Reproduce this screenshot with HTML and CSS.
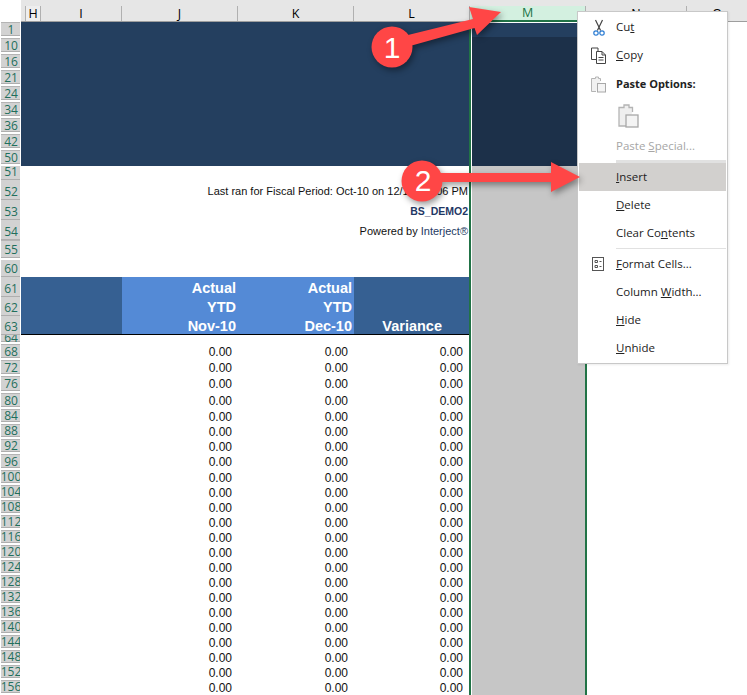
FILE: index.html
```html
<!DOCTYPE html>
<html lang="en">
<head>
<meta charset="utf-8">
<title>Insert column</title>
<link rel="stylesheet" href="styles.css">
</head>
<body>
<div class="sheet">
  <div class="colhead">
    <div class="corner"></div>
    <div class="gapcol"></div>
    <div class="ch w-h">H</div>
    <div class="ch w-i">I</div>
    <div class="ch w-j">J</div>
    <div class="ch w-k">K</div>
    <div class="ch w-l">L</div>
    <div class="ch w-m sel">M</div>
    <div class="ch w-n">N</div>
    <div class="ch w-o">O</div>
  </div>

  <div class="row h16 navy"><div class="rh f">1</div><div class="main"></div><div class="m band"></div></div>
  <div class="row h16 navy"><div class="rh f">10</div><div class="main"></div><div class="m dark"></div></div>
  <div class="row h16 navy"><div class="rh f">16</div><div class="main"></div><div class="m dark"></div></div>
  <div class="row h16 navy"><div class="rh f">21</div><div class="main"></div><div class="m dark"></div></div>
  <div class="row h16 navy"><div class="rh f">24</div><div class="main"></div><div class="m dark"></div></div>
  <div class="row h16 navy"><div class="rh f">34</div><div class="main"></div><div class="m dark"></div></div>
  <div class="row h16 navy"><div class="rh f">36</div><div class="main"></div><div class="m dark"></div></div>
  <div class="row h16 navy"><div class="rh f">42</div><div class="main"></div><div class="m dark"></div></div>
  <div class="row h16 navy"><div class="rh f">50</div><div class="main"></div><div class="m dark"></div></div>

  <div class="row h14"><div class="rh">51</div><div class="main"></div><div class="m"></div></div>
  <div class="row h20"><div class="rh">52</div><div class="main note">Last ran for Fiscal Period: Oct-10 on 12/1/18 1:06 PM</div><div class="m"></div></div>
  <div class="row h20"><div class="rh">53</div><div class="main note code">BS_DEMO2</div><div class="m"></div></div>
  <div class="row h20"><div class="rh">54</div><div class="main note">Powered by&nbsp;<span class="brand">Interject®</span></div><div class="m"></div></div>
  <div class="row h20"><div class="rh f">55</div><div class="main"></div><div class="m"></div></div>
  <div class="row h17"><div class="rh">60</div><div class="main"></div><div class="m"></div></div>

  <div class="row h20 th"><div class="rh">61</div><div class="c i"></div><div class="c j hi">Actual</div><div class="c k hi">Actual</div><div class="c l"></div><div class="m"></div></div>
  <div class="row h19 th"><div class="rh">62</div><div class="c i"></div><div class="c j hi">YTD</div><div class="c k hi">YTD</div><div class="c l"></div><div class="m"></div></div>
  <div class="row h19 th last"><div class="rh">63</div><div class="c i"></div><div class="c j hi">Nov-10</div><div class="c k hi">Dec-10</div><div class="c l var">Variance</div><div class="m"></div></div>
  <div class="row h9"><div class="rh f short">64</div><div class="main"></div><div class="m"></div></div>

  <div class="row h16 v"><div class="rh f">68</div><div class="c i"></div><div class="c j">0.00</div><div class="c k">0.00</div><div class="c l">0.00</div><div class="m"></div></div>
  <div class="row h16 v"><div class="rh f">72</div><div class="c i"></div><div class="c j">0.00</div><div class="c k">0.00</div><div class="c l">0.00</div><div class="m"></div></div>
  <div class="row h17 v"><div class="rh f">76</div><div class="c i"></div><div class="c j">0.00</div><div class="c k">0.00</div><div class="c l">0.00</div><div class="m"></div></div>
  <div class="row h16 v"><div class="rh f">80</div><div class="c i"></div><div class="c j">0.00</div><div class="c k">0.00</div><div class="c l">0.00</div><div class="m"></div></div>
  <div class="row h15 v"><div class="rh f">84</div><div class="c i"></div><div class="c j">0.00</div><div class="c k">0.00</div><div class="c l">0.00</div><div class="m"></div></div>
  <div class="row h15 v"><div class="rh f">88</div><div class="c i"></div><div class="c j">0.00</div><div class="c k">0.00</div><div class="c l">0.00</div><div class="m"></div></div>
  <div class="row h15 v"><div class="rh f">92</div><div class="c i"></div><div class="c j">0.00</div><div class="c k">0.00</div><div class="c l">0.00</div><div class="m"></div></div>
  <div class="row h16 v"><div class="rh f">96</div><div class="c i"></div><div class="c j">0.00</div><div class="c k">0.00</div><div class="c l">0.00</div><div class="m"></div></div>
  <div class="row h15 v"><div class="rh f">100</div><div class="c i"></div><div class="c j">0.00</div><div class="c k">0.00</div><div class="c l">0.00</div><div class="m"></div></div>
  <div class="row h15 v"><div class="rh f">104</div><div class="c i"></div><div class="c j">0.00</div><div class="c k">0.00</div><div class="c l">0.00</div><div class="m"></div></div>
  <div class="row h15 v"><div class="rh f">108</div><div class="c i"></div><div class="c j">0.00</div><div class="c k">0.00</div><div class="c l">0.00</div><div class="m"></div></div>
  <div class="row h15 v"><div class="rh f">112</div><div class="c i"></div><div class="c j">0.00</div><div class="c k">0.00</div><div class="c l">0.00</div><div class="m"></div></div>
  <div class="row h15 v"><div class="rh f">116</div><div class="c i"></div><div class="c j">0.00</div><div class="c k">0.00</div><div class="c l">0.00</div><div class="m"></div></div>
  <div class="row h15 v"><div class="rh f">120</div><div class="c i"></div><div class="c j">0.00</div><div class="c k">0.00</div><div class="c l">0.00</div><div class="m"></div></div>
  <div class="row h15 v"><div class="rh f">124</div><div class="c i"></div><div class="c j">0.00</div><div class="c k">0.00</div><div class="c l">0.00</div><div class="m"></div></div>
  <div class="row h15 v"><div class="rh f">128</div><div class="c i"></div><div class="c j">0.00</div><div class="c k">0.00</div><div class="c l">0.00</div><div class="m"></div></div>
  <div class="row h15 v"><div class="rh f">132</div><div class="c i"></div><div class="c j">0.00</div><div class="c k">0.00</div><div class="c l">0.00</div><div class="m"></div></div>
  <div class="row h15 v"><div class="rh f">136</div><div class="c i"></div><div class="c j">0.00</div><div class="c k">0.00</div><div class="c l">0.00</div><div class="m"></div></div>
  <div class="row h15 v"><div class="rh f">140</div><div class="c i"></div><div class="c j">0.00</div><div class="c k">0.00</div><div class="c l">0.00</div><div class="m"></div></div>
  <div class="row h15 v"><div class="rh f">144</div><div class="c i"></div><div class="c j">0.00</div><div class="c k">0.00</div><div class="c l">0.00</div><div class="m"></div></div>
  <div class="row h15 v"><div class="rh f">148</div><div class="c i"></div><div class="c j">0.00</div><div class="c k">0.00</div><div class="c l">0.00</div><div class="m"></div></div>
  <div class="row h15 v"><div class="rh f">152</div><div class="c i"></div><div class="c j">0.00</div><div class="c k">0.00</div><div class="c l">0.00</div><div class="m"></div></div>
  <div class="row h15 v"><div class="rh f">156</div><div class="c i"></div><div class="c j">0.00</div><div class="c k">0.00</div><div class="c l">0.00</div><div class="m"></div></div>
</div>

<div class="menu">
  <div class="item"><span class="ico"><svg width="12" height="17" viewBox="0 0 12 17"><path d="M2.5 1 L7.6 11.5 M9.5 1 L4.4 11.5" fill="none" stroke="#444" stroke-width="1.2"/><circle cx="3" cy="14" r="2.2" fill="none" stroke="#2b7cd3" stroke-width="1.2"/><circle cx="9" cy="14" r="2.2" fill="none" stroke="#2b7cd3" stroke-width="1.2"/></svg></span><span>Cu<u>t</u></span></div>
  <div class="item"><span class="ico"><svg width="17" height="17" viewBox="0 0 17 17"><path d="M6 12.5 H1.5 V1 H8 V4" fill="none" stroke="#444"/><path d="M6.5 4.5 H12 L15.5 8 V16.5 H6.5 Z M12 4.5 V8 H15.5 M8.5 10.5 H13.5 M8.5 13 H13.5" fill="none" stroke="#444"/></svg></span><span><u>C</u>opy</span></div>
  <div class="item head"><span class="ico"><svg width="15" height="17" viewBox="0 0 15 17"><path d="M9.5 5 V2.5 H7.5 V1 H4.5 V2.5 H.5 V15.5 H5" fill="#f0f0f0" stroke="#b4b4b4"/><rect x="6.500" y="7.500" width="8" height="8.500" fill="#f4f4f4" stroke="#a8a8a8"/></svg></span><span>Paste Options:</span></div>
  <div class="pasterow"><svg width="21" height="24" viewBox="0 0 21 24"><path d="M14.500 8 V3.500 H11 V1 H6 V3.500 H1 V22 H8" fill="#efefef" stroke="#b4b4b4" stroke-width="1.300"/><rect x="8" y="11" width="12" height="12" fill="#f4f4f4" stroke="#a8a8a8" stroke-width="1.300"/></svg></div>
  <div class="item off"><span class="ico"></span><span>Paste <u>S</u>pecial...</span></div>
  <div class="sep"></div>
  <div class="item on"><span class="ico"></span><span><u>I</u>nsert</span></div>
  <div class="item"><span class="ico"></span><span><u>D</u>elete</span></div>
  <div class="item"><span class="ico"></span><span>Clear Co<u>n</u>tents</span></div>
  <div class="sep sep2"></div>
  <div class="item"><span class="ico"><svg width="13" height="14" viewBox="0 0 13 14"><rect x=".5" y=".5" width="11" height="13" fill="none" stroke="#555"/><path d="M3 3.500 H5.500 V5.500 H3 Z M3 8.500 H5.500 V10.500 H3 Z M7.500 4.500 H9.500 M7.500 9.500 H9.500" fill="none" stroke="#555"/></svg></span><span><u>F</u>ormat Cells...</span></div>
  <div class="item"><span class="ico"></span><span>Column <u>W</u>idth...</span></div>
  <div class="item"><span class="ico"></span><span><u>H</u>ide</span></div>
  <div class="item"><span class="ico"></span><span><u>U</u>nhide</span></div>
</div>

<svg class="callouts" width="747" height="695" viewBox="0 0 747 695">
  <g class="shade">
    <polygon points="408,35 473,19 469,7 501,12 477,35 474.500,28 410,46"/>
    <circle cx="392" cy="47" r="20.500"/>
    <polygon points="438,173 551,173 551,162 580,177 551,192 551,182 438,182"/>
    <circle cx="422" cy="181" r="20.500"/>
  </g>
  <text class="num" x="392" y="58">1</text>
  <text class="num" x="423" y="191">2</text>
</svg>
</body>
</html>
```

FILE: styles.css
```css
* { box-sizing: border-box; }
html, body { margin: 0; padding: 0; }
body { width: 747px; height: 695px; overflow: hidden; background: #fff; position: relative; font-family: "Liberation Sans", Arial, sans-serif; }

.sheet { display: flex; flex-direction: column; width: 747px; height: 695px; overflow: hidden; }

/* column header */
.colhead { display: flex; flex: none; height: 22px; background: #e6e6e6; border-bottom: 1px solid #9e9e9e; }
.corner { flex: none; width: 21px; background: #fff; margin-bottom: -1px; }
.gapcol { flex: none; width: 4px; }
.ch { flex: none; margin-top: 6px; border-right: 1px solid #b0b0b0; font: 12.500px/15px "Open Sans", sans-serif; color: #000; text-align: center; }
.w-h { width: 16px; background: #eeeeee; border-left: 1px solid #b0b0b0; }
.w-i { width: 81px; }
.w-j { width: 116px; }
.w-k { width: 116px; }
.w-l { width: 116px; }
.w-m { width: 116px; }
.w-n { width: 101px; }
.w-o { width: 60px; border-right: 0; }
.sel { background: #d3f0e0; color: #217346; box-shadow: 0 2px 0 #217346; height: 14px; line-height: 14px; }

/* rows */
.row { display: flex; flex: none; overflow: hidden; }
.h9 { height: 9px; } .h14 { height: 14px; } .h15 { height: 15px; } .h16 { height: 16px; }
.h17 { height: 17px; } .h19 { height: 19px; } .h20 { height: 20px; }

.rh { flex: none; width: 19px; margin: 0 1px; padding-left: 1px; background: #d2d2d2; border-bottom: 1px solid #aeaeae; color: #1f6f5c; font: 12px/14px "Open Sans", sans-serif; display: flex; align-items: flex-end; justify-content: center; overflow: hidden; white-space: nowrap; }
.rh.f { align-items: center; border-top: 1px solid #b4b4b4; border-bottom: 2px solid #fff; box-shadow: inset 0 -1px 0 #aeaeae; }
.rh.short { border-top: 0; align-items: flex-start; line-height: 6px; }

.main { flex: none; width: 448px; }
.navy .main { background: #243f5f; }
.note { display: flex; align-items: center; justify-content: flex-end; padding: 2px 1px 0 0; font-size: 11px; color: #111; white-space: nowrap; }
.code { font-weight: 700; font-size: 10.500px; color: #1f3864; }
.brand { color: #243a63; }

.m { flex: none; width: 118px; background: #c6c6c6; border-left: 2px solid #217346; border-right: 2px solid #217346; box-shadow: inset 1px 0 0 #fff; }
.m.band { background: linear-gradient(#243f5f 15px, #1c3049 15px); box-shadow: inset 1px 1px 0 #fff; }
.m.dark { background: #1c3049; }

.c { flex: none; font-size: 12px; color: #111; text-align: right; white-space: nowrap; }
.i { width: 101px; }
.j, .k { width: 116px; }
.l { width: 115px; }

.v .c { line-height: 15px; padding: 1px 6px 0 0; }

.th .c { background: #366092; color: #fff; font-weight: 700; font-size: 14.500px; line-height: 19px; padding: 1px 2px 0 0; }
.th.h20 .c { padding-top: 2px; }
.th .hi { background: #548ad6; }
.th .var { padding-right: 27px; }
.th.last .c { border-bottom: 1px solid #000; }

/* context menu */
.menu { position: absolute; left: 577px; top: 11px; width: 151px; height: 353px; background: #fff; border: 1px solid #c8c8c8; padding: 1px; box-shadow: 1px 1px 2px rgba(0,0,0,.08); font: 11.500px/28px "Open Sans", sans-serif; color: #222; }
.item { display: flex; align-items: center; height: 28px; }
.ico { flex: none; width: 37px; display: flex; justify-content: center; padding-left: 2px; }
.item u { text-underline-offset: 1px; }
.head { height: 30px; font-weight: 700; font-size: 11px; }
.pasterow { height: 33px; padding: 5px 0 0 39px; line-height: 0; }
.off { color: #a6a6a6; }
.on { background: #d2d0ce; }
.sep { height: 3px; margin-left: 37px; background: #e1e1e1; }
.sep2 { background: linear-gradient(#fff 1px, #e1e1e1 1px, #e1e1e1 2px, #fff 2px); }

/* numbered callouts */
.callouts { position: absolute; left: 0; top: 0; pointer-events: none; }
.shade { fill: #ff4646; filter: drop-shadow(2px 3px 3px rgba(0,0,0,.4)); }
.num { fill: #fff; font: 30px "Liberation Sans", sans-serif; text-anchor: middle; }
```
